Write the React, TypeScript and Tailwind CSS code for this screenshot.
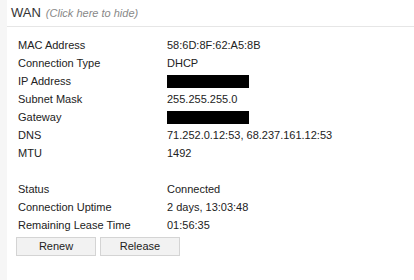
const rows: [string, string | null][] = [
  ['MAC Address', '58:6D:8F:62:A5:8B'],
  ['Connection Type', 'DHCP'],
  ['IP Address', null],
  ['Subnet Mask', '255.255.255.0'],
  ['Gateway', null],
  ['DNS', '71.252.0.12:53, 68.237.161.12:53'],
  ['MTU', '1492'],
];

const status: [string, string][] = [
  ['Status', 'Connected'],
  ['Connection Uptime', '2 days, 13:03:48'],
  ['Remaining Lease Time', '01:56:35'],
];

function Row({ label, value }: { label: string; value: string | null }) {
  return (
    <div className="flex h-[18px] items-center">
      <div className="w-[149px]">{label}</div>
      {value === null ? (
        <div className="h-[13px] w-[82px] bg-black" />
      ) : (
        <div>{value}</div>
      )}
    </div>
  );
}

export default function App() {
  return (
    <div
      className="flex h-[280px] w-[414px] bg-[#f6f6f6] text-[11px] text-[#222]"
      style={{ fontFamily: '"Liberation Sans", Arial, sans-serif' }}
    >
      <div className="w-[7px]" />
      <div className="flex-1 bg-white">
        {/* Header */}
        <div className="flex h-[27px] items-center border-b border-[#e6e6e6] pl-[4px]">
          <span className="text-[13px] text-[#333]">WAN</span>
          <span className="ml-[5px] text-[11px] italic text-[#888]">(Click here to hide)</span>
        </div>

        <div className="pl-[11px] pt-[9px]">
          {rows.map(([l, v]) => (
            <Row key={l} label={l} value={v} />
          ))}
          <div className="h-[18px]" />
          {status.map(([l, v]) => (
            <Row key={l} label={l} value={v} />
          ))}

          <div className="mt-[3px] flex gap-[4px] pl-[-2px]">
            <button className="-ml-[2px] h-[19px] w-[80px] border border-[#d4d4d4] bg-[#f2f2f2] text-[11px] text-[#222]">
              Renew
            </button>
            <button className="h-[19px] w-[80px] border border-[#d4d4d4] bg-[#f2f2f2] text-[11px] text-[#222]">
              Release
            </button>
          </div>
        </div>
      </div>
    </div>
  );
}
